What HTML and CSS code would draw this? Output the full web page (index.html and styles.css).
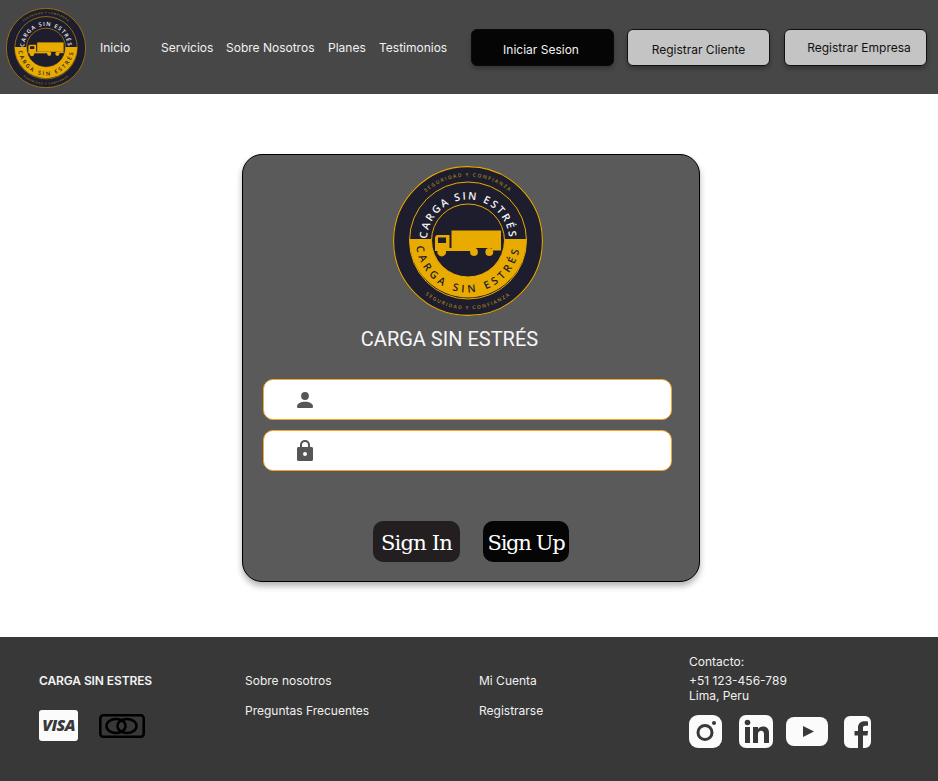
FILE: index.html
```html
<!DOCTYPE html>
<html lang="es">
<head>
<meta charset="utf-8">
<title>Carga Sin Estrés</title>
<link rel="stylesheet" href="styles.css">
</head>
<body>
<svg class="defs" width="0" height="0" aria-hidden="true">
  <defs>
    <symbol id="logo" viewBox="0 0 150 150">
      <path id="arcOutTop" d="M 75 139.500 a 64.500 64.500 0 1 1 0 -129 a 64.500 64.500 0 1 1 0 129" fill="none"/>
      <path id="arcOutBot" d="M 75 6.500 a 68.500 68.500 0 1 0 0 137 a 68.500 68.500 0 1 0 0 -137" fill="none"/>
      <path id="arcTop" d="M 75 115.500 a 41 41 0 1 1 0 -82 a 41 41 0 1 1 0 82" fill="none"/>
      <path id="arcBot" d="M 75 22.500 a 52 52 0 1 0 0 104 a 52 52 0 1 0 0 -104" fill="none"/>
      <circle cx="75" cy="75" r="75" fill="#1d1d2d"/>
      <circle cx="75" cy="75" r="74.400" fill="none" stroke="#e8a800" stroke-width="1.100"/>
      <path d="M16.500 73 A58.500 58.500 0 0 0 133.500 73 Z" fill="#eaab00"/>
      <circle cx="75" cy="74.500" r="58.500" fill="none" stroke="#eaab00" stroke-width="1"/>
      <circle cx="75" cy="74.500" r="36.500" fill="#1d1d2d" stroke="#eaab00" stroke-width="1"/>
      <g fill="#eaab00">
        <rect x="58.500" y="64.500" width="49.500" height="17.500"/>
        <path d="M42 83.500 V72 q0 -3 3 -3 H56.500 V83.500 Z M45 71.500 V77 H53 V71.500 Z" fill-rule="evenodd"/>
        <rect x="42" y="82" width="41" height="3"/>
        <rect x="99" y="82" width="9" height="2.500"/>
        <circle cx="48.700" cy="86" r="4.400"/>
        <circle cx="81" cy="86" r="3.900"/>
        <circle cx="96.300" cy="86" r="3.900"/>
      </g>
      <text class="logo-main logo-w"><textPath href="#arcTop" startOffset="50%">CARGA SIN ESTRÉS</textPath></text>
      <text class="logo-main logo-d"><textPath href="#arcBot" startOffset="50%">CARGA SIN ESTRÉS</textPath></text>
      <text class="logo-small"><textPath href="#arcOutTop" startOffset="50%">SEGURIDAD Y CONFIANZA</textPath></text>
      <text class="logo-small"><textPath href="#arcOutBot" startOffset="50%">SEGURIDAD Y CONFIANZA</textPath></text>
    </symbol>
  </defs>
</svg>

<header class="topbar">
  <svg class="logo-header"><use href="#logo"/></svg>
  <nav class="nav">
    <a>Inicio</a><a>Servicios</a><a>Sobre Nosotros</a><a>Planes</a><a>Testimonios</a>
  </nav>
  <div class="actions">
    <button class="btn btn-dark">Iniciar Sesion</button>
    <button class="btn btn-light">Registrar Cliente</button>
    <button class="btn btn-light btn-up">Registrar Empresa</button>
  </div>
</header>

<main class="main">
  <section class="card">
    <svg class="logo-card"><use href="#logo"/></svg>
    <h1 class="title">CARGA SIN ESTRÉS</h1>
    <label class="field">
      <svg class="field-icon" viewBox="0 0 16 16"><circle cx="8" cy="4" r="3.900"/><path d="M0 14.500C0 11.500 3.600 9.800 8 9.800s8 1.700 8 4.700c0 1-.6 1.500-1.500 1.500h-13C.6 16 0 15.500 0 14.500z"/></svg>
      <input class="field-input" type="text" aria-label="Usuario">
    </label>
    <label class="field">
      <svg class="field-icon field-icon-lock" viewBox="0 0 16 21"><path fill-rule="evenodd" d="M8 0C4.800 0 3 2.200 3 5v2H1.500C.6 7 0 7.600 0 8.500v11C0 20.400.6 21 1.500 21h13c.9 0 1.500-.6 1.500-1.500v-11C16 7.600 15.400 7 14.500 7H13V5c0-2.800-1.800-5-5-5zM5 5c0-1.800 1.200-3 3-3s3 1.200 3 3v2H5V5zm3 7a2 2 0 1 1 0 4 2 2 0 0 1 0-4z"/></svg>
      <input class="field-input" type="password" aria-label="Contraseña">
    </label>
    <div class="sign-row">
      <button class="sign sign-in">Sign In</button>
      <button class="sign sign-up">Sign Up</button>
    </div>
  </section>
</main>

<footer class="footer">
  <div class="col col-brand">
    <strong class="brand">CARGA SIN ESTRES</strong>
    <div class="pay">
      <span class="visa">VISA</span>
      <svg class="mc" viewBox="0 0 46 24"><rect x="1.300" y="1.300" width="43.400" height="21.400" rx="3" fill="none" stroke="#000" stroke-width="2.600"/><ellipse cx="17" cy="12" rx="9.500" ry="7" fill="none" stroke="#000" stroke-width="2.500"/><ellipse cx="28" cy="12" rx="9.500" ry="7" fill="none" stroke="#000" stroke-width="2.500"/></svg>
    </div>
  </div>
  <div class="col col-links">
    <a>Sobre nosotros</a>
    <a>Preguntas Frecuentes</a>
  </div>
  <div class="col col-links">
    <a>Mi Cuenta</a>
    <a>Registrarse</a>
  </div>
  <div class="col col-contact">
    <p class="contact-head">Contacto:</p>
    <p class="contact-line">+51 123-456-789<br>Lima, Peru</p>
    <div class="social">
      <svg class="ig" viewBox="0 0 33 33"><rect width="33" height="33" rx="9" fill="#fbfbfb"/><circle cx="16" cy="17.500" r="7" fill="none" stroke="#383838" stroke-width="3"/><circle cx="25" cy="8" r="2" fill="#383838"/></svg>
      <svg class="in" viewBox="0 0 34 33"><rect width="34" height="33" rx="7" fill="#fbfbfb"/><circle cx="8.500" cy="7.500" r="2.800" fill="#383838"/><rect x="6" y="12" width="5" height="16" fill="#383838"/><path d="M14 12h5v2.200c1-1.600 2.800-2.600 5-2.600 4 0 6 2.400 6 6.600V28h-5v-8.800c0-2.200-.9-3.400-2.800-3.400-2 0-3.200 1.300-3.200 3.500V28h-5z" fill="#383838"/></svg>
      <svg class="yt" viewBox="0 0 42 29"><rect width="42" height="29" rx="8" fill="#fbfbfb"/><path d="M17 9l11 5.500L17 20z" fill="#383838"/></svg>
      <svg class="fb" viewBox="0 0 27 32"><path d="M6 0h15a6 6 0 0 1 6 6v20a6 6 0 0 1-6 6h-2V19.500h4.500l.6-4.500H19v-3c0-1.500.8-2.300 2.300-2.300H24V5.500c-1-.2-2.200-.3-3.500-.3-4 0-6.500 2.400-6.500 6.500V15h-3.500v4.500H14V32H6a6 6 0 0 1-6-6V6a6 6 0 0 1 6-6z" fill="#fbfbfb"/></svg>
    </div>
  </div>
</footer>
</body>
</html>
```
FILE: styles.css
```css
* { box-sizing: border-box; }
html, body { margin: 0; padding: 0; }
body {
  width: 938px;
  height: 781px;
  overflow: hidden;
  display: flex;
  flex-direction: column;
  background: #fff;
  font-family: Inter, "Liberation Sans", sans-serif;
}
.defs { display: block; height: 0; }

/* logo */
.logo-main { font-family: "Open Sans", sans-serif; font-weight: 600; text-anchor: middle; }
.logo-w { font-size: 10.500px; letter-spacing: 2px; fill: #f4f4f4; }
.logo-d { font-size: 10.500px; letter-spacing: 3.600px; fill: #1d1d2d; }
.logo-small { font-family: "Open Sans", sans-serif; font-size: 5px; font-weight: 600; letter-spacing: 1.400px; text-anchor: middle; fill: #a8821a; }

/* top bar */
.topbar {
  flex: 0 0 94px;
  display: flex;
  align-items: center;
  padding: 0 11px 0 6px;
  background: #474747;
}
.logo-header { width: 80px; height: 80px; flex: none; margin-top: 2px; }
.nav {
  display: grid;
  grid-template-columns: 61px 65px 102px 51px auto;
  margin-left: 14px;
  font-size: 12px;
  line-height: 15px;
  color: #f2f2f2;
}
.actions { display: flex; gap: 13px; margin-left: auto; }
.btn {
  width: 143px;
  height: 37px;
  padding: 5px 0 0;
  border-radius: 6px;
  font: 12px/15px Inter, sans-serif;
  box-shadow: 0 3px 4px rgba(0, 0, 0, .25);
}
.btn-dark { background: #050505; border: 1px solid #0a0a0a; color: #f2f2f2; padding-right: 3px; }
.btn-light { background: #c4c4c4; border: 1px solid #111; color: #111; }
.btn-up { margin-left: 1px; padding: 1px 0 0 7px; }

/* login */
.main {
  flex: 1;
  padding: 60px 0 0 242px;
}
.card {
  width: 458px;
  height: 428px;
  padding: 11px 0 0 20px;
  background: #5a5a5a;
  border: 1px solid #000;
  border-radius: 20px;
  box-shadow: 0 4px 6px rgba(0, 0, 0, .3);
}
.logo-card { display: block; width: 150px; height: 150px; margin-left: 130px; }
.title {
  width: 373px;
  margin: 11px 0 28px;
  font: 400 20px/24px Roboto, sans-serif;
  color: #f6f6f6;
  text-align: center;
}
.field {
  display: flex;
  align-items: center;
  width: 409px;
  height: 41px;
  margin-bottom: 10px;
  padding-left: 33px;
  background: #fff;
  border: 1px solid #f5a623;
  border-radius: 10px;
}
.field-icon { width: 16px; height: 16px; flex: none; fill: #565656; }
.field-icon-lock { height: 21px; }
.field-input { flex: 1; min-width: 0; margin-left: 10px; margin-right: 10px; border: 0; outline: 0; background: transparent; }
.sign-row { display: flex; gap: 23px; margin: 50px 0 0 110px; }
.sign {
  width: 87px;
  height: 41px;
  padding: 3px 0 0;
  border: 0;
  border-radius: 10px;
  font: 400 21px/38px "DejaVu Serif", serif;
  color: #fff;
  white-space: nowrap;
  letter-spacing: -.8px;
}
.sign-in { background: #231f20; }
.sign-up { background: #050505; width: 86px; letter-spacing: -1.300px; }

/* footer */
.footer {
  flex: 0 0 144px;
  display: grid;
  grid-template-columns: 206px 234px 210px 1fr;
  padding-left: 39px;
  background: #383838;
  color: #f0f0f0;
  font-size: 12px;
  line-height: 15px;
}
.col { padding-top: 36px; }
.brand { display: block; font-weight: 600; letter-spacing: -.1px; color: #f4f4f4; }
.pay { display: flex; align-items: center; gap: 21px; margin-top: 22px; }
.visa {
  display: block;
  width: 39px;
  height: 31px;
  background: #fbfbfb;
  border-radius: 3px;
  color: #383838;
  font: italic 800 16px/31px "Open Sans", sans-serif;
  letter-spacing: -.6px;
  text-align: center;
}
.mc { width: 46px; height: 24px; display: block; }
.col-links { display: flex; flex-direction: column; gap: 15px; }
.col-contact { padding-top: 17px; }
.contact-head { margin: 0 0 4px; }
.contact-line { margin: 0; line-height: 15px; }
.social { display: flex; align-items: center; margin-top: 12px; }
.social svg { display: block; flex: none; }
.ig { width: 33px; height: 33px; }
.in { width: 34px; height: 33px; margin-left: 17px; }
.yt { width: 42px; height: 29px; margin-left: 13px; }
.fb { width: 27px; height: 32px; margin-left: 16px; }
```
